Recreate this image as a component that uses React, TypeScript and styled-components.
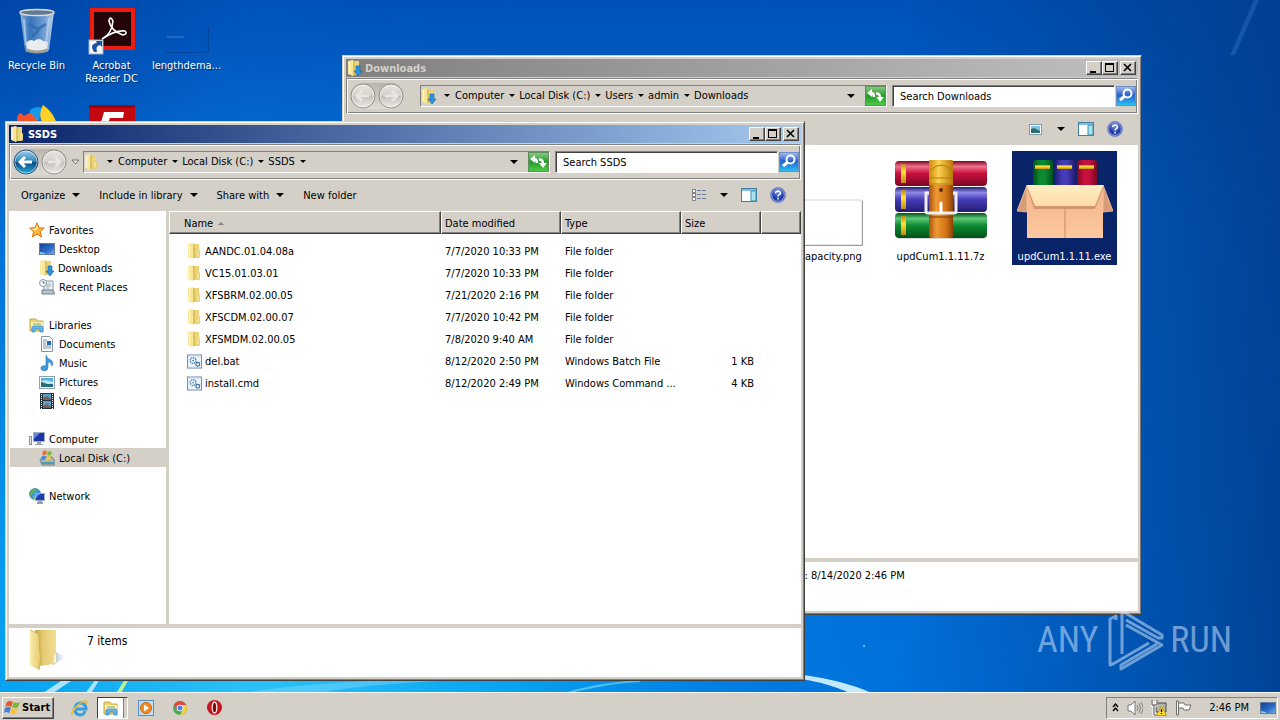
import React from 'react';
import styled, { createGlobalStyle, css } from 'styled-components';

const face = '#d4d0c8';
const uiFont = '"DejaVu Sans Condensed", "DejaVu Sans", sans-serif';

const GlobalStyle = createGlobalStyle`
  * { box-sizing: border-box; }
  body { margin: 0; overflow: hidden; background: #0058c0; }
  body, button, input, table { font: 11px/13px ${uiFont}; color: #000; }
  button { border: 0; padding: 0; background: none; }
  svg { display: block; flex: none; }
  a { color: inherit; text-decoration: none; }
`;

const raised = css`
  border: 1px solid;
  border-color: #fff #404040 #404040 #fff;
  box-shadow: inset -1px -1px #808080;
`;

/* ---------- desktop ---------- */

const Screen = styled.main`
  position: relative;
  display: flex;
  flex-direction: column;
  min-height: 100vh;
  overflow: hidden;
`;
const Wallpaper = styled.svg`
  position: absolute;
  inset: 0;
  width: 100%;
  height: 100%;
`;
const Desktop = styled.div`
  position: relative;
  flex: 1;
`;
const ShortcutGrid = styled.div`
  display: grid;
  grid-template-columns: repeat(3, 75px);
  grid-auto-rows: 97px;
  padding-top: 7px;
`;
const Shortcut = styled.a`
  display: flex;
  flex-direction: column;
  align-items: center;
  gap: 4px;
  padding: 0 3px 0 1px;
  color: #fff;
  text-align: center;
  text-shadow: 1px 1px 1px #002a66;
`;

/* ---------- windows ---------- */

const Frame = styled.section<{ $place: 'front' | 'back' }>`
  position: absolute;
  display: flex;
  flex-direction: column;
  width: 62.5vw;
  min-width: 700px;
  height: calc(100vh - 160px);
  min-height: 480px;
  padding: 3px;
  background: ${face};
  border: 1px solid;
  border-color: ${face} #404040 #404040 ${face};
  box-shadow: inset 1px 1px #fff, inset -1px -1px #808080;
  ${p => p.$place === 'front' ? 'left: 5px; top: 121px;' : 'right: 138px; top: 55px;'}
`;
const TitleBar = styled.header<{ $active: boolean }>`
  display: flex;
  align-items: center;
  gap: 3px;
  height: 18px;
  padding: 0 2px 0 1px;
  color: ${p => (p.$active ? '#fff' : face)};
  background: ${p => p.$active
    ? 'linear-gradient(90deg, #0a246a, #a6caf0)'
    : 'linear-gradient(90deg, #808080, #c0c0c0)'};
`;
const Title = styled.h1`
  flex: 1;
  margin: 0;
  font: bold 11px/13px ${uiFont};
`;
const CaptionButton = styled.button<{ $apart?: boolean }>`
  ${raised}
  width: 16px;
  height: 14px;
  margin-left: ${p => (p.$apart ? '2px' : '0')};
  background: ${face};
`;
const CaptionGroup = styled.div`
  display: flex;
`;
const NavBar = styled.nav`
  display: flex;
  align-items: center;
  height: 36px;
  margin-top: 1px;
  padding-left: 3px;
  border: 1px solid;
  border-color: #808080 #fff #fff #808080;
  box-shadow: inset 1px 1px #fff, inset -1px -1px #808080;
`;
const TravelButtons = styled.div`
  display: flex;
  gap: 2px;
  border-radius: 13px;
  background: linear-gradient(#b8b5ae, #dedbd4);
`;
const HistorySlot = styled.div`
  display: flex;
  justify-content: center;
  width: 16px;
`;
const AddressBar = styled.div`
  display: flex;
  align-items: center;
  flex: 1;
  height: 22px;
  border: 1px solid;
  border-color: #808080 #fff #fff #808080;
`;
const Crumbs = styled.ol`
  display: flex;
  align-items: center;
  flex: 1;
  gap: 4px;
  margin: 0;
  padding: 0 0 1px 8px;
  list-style: none;
`;
const Crumb = styled.li`
  display: flex;
  align-items: center;
  gap: 5px;
`;
const DropButton = styled.button`
  display: flex;
  padding: 4px 10px;
`;
const SearchBox = styled.div`
  display: flex;
  width: 245px;
  margin-left: 5px;
`;
const SearchInput = styled.input`
  flex: 1;
  min-width: 0;
  height: 22px;
  padding: 0 7px;
  border: 1px solid;
  border-color: #808080 #fff #fff #808080;
  box-shadow: inset 1px 1px #404040;
  background: #fff;
  outline: 0;
  &::placeholder { color: #000; opacity: 1; }
`;
const ToolBar = styled.div`
  display: flex;
  align-items: center;
  gap: 19px;
  height: 31px;
  padding: 0 15px 1px 12px;
`;
const ToolButton = styled.button`
  display: flex;
  align-items: center;
  gap: 7px;
`;
const ToolIcons = styled.div`
  display: flex;
  align-items: center;
  gap: 13px;
  margin-left: auto;
`;
const Body = styled.div`
  display: flex;
  flex: 1;
  min-height: 0;
`;
const SideBar = styled.aside`
  width: 160px;
  padding-top: 9px;
  background: #fff;
  border-right: 3px solid ${face};
`;
const SideGroup = styled.ul`
  margin: 0 0 19px;
  padding: 0;
  list-style: none;
`;
const SideLink = styled.a<{ $child?: boolean; $selected?: boolean }>`
  display: flex;
  align-items: center;
  gap: 4px;
  height: 19px;
  margin-left: 1px;
  padding: 1px 0 0 ${p => (p.$child ? '29px' : '19px')};
  background: ${p => (p.$selected ? face : 'transparent')};
`;
const ListPane = styled.div`
  flex: 1;
  min-width: 0;
  background: #fff;
`;
const FileTable = styled.table`
  width: 100%;
  table-layout: fixed;
  border-collapse: separate;
  border-spacing: 0;
`;
const HeadCell = styled.th<{ $w?: number; $indent?: number }>`
  ${raised}
  width: ${p => (p.$w ? `${p.$w}px` : 'auto')};
  height: 23px;
  padding: 1px 0 0 ${p => p.$indent ?? 3}px;
  background: ${face};
  text-align: left;
  font-weight: normal;
`;
const SortLabel = styled.span`
  display: flex;
  align-items: center;
  gap: 5px;
`;
const Spacer = styled.tr`
  height: 6px;
`;
const Cell = styled.td<{ $right?: boolean }>`
  height: 22px;
  padding: 0 ${p => (p.$right ? '7px' : '0')} 0 4px;
  white-space: nowrap;
  text-align: ${p => (p.$right ? 'right' : 'left')};
`;
const FileName = styled.a`
  display: flex;
  align-items: center;
  gap: 3px;
  padding-left: 14px;
`;
const TilePane = styled.div`
  display: flex;
  flex: 1;
  align-items: flex-start;
  justify-content: flex-end;
  gap: 19px;
  padding: 6px 21px;
  background: #fff;
`;
const Tile = styled.a<{ $selected?: boolean }>`
  display: flex;
  flex-direction: column;
  align-items: center;
  gap: 2px;
  width: 105px;
  height: 114px;
  padding-top: 1px;
  white-space: nowrap;
  color: ${p => (p.$selected ? '#fff' : '#000')};
  background: ${p => (p.$selected ? '#0a246a' : 'transparent')};
`;
const DetailsPane = styled.footer`
  display: flex;
  gap: 22px;
  height: 49px;
  margin-top: 4px;
  padding-left: 14px;
  background: #fff;
`;
const ItemCount = styled.p`
  margin: 6px 0 0;
  font-size: 12px;
  line-height: 14px;
`;
const CreatedLine = styled.p`
  margin: 7px 0 0;
  padding-left: 380px;
`;

/* ---------- watermark and taskbar ---------- */

const Watermark = styled.div`
  position: absolute;
  right: 48px;
  bottom: 20px;
  display: flex;
  align-items: center;
  gap: 5px;
  font: 36px/60px "Roboto Condensed", "Liberation Sans Narrow", "Liberation Sans", sans-serif;
  color: rgba(220, 235, 255, 0.5);
`;
const TaskBar = styled.footer`
  position: relative;
  display: flex;
  align-items: center;
  height: 28px;
  padding: 2px 2px 0;
  background: ${face};
  border-top: 1px solid #fff;
`;
const StartButton = styled.button`
  ${raised}
  display: flex;
  align-items: center;
  gap: 1px;
  height: 22px;
  padding: 0 3px 0 1px;
  font: bold 11px/13px ${uiFont};
`;
const QuickLaunch = styled.div`
  display: flex;
  align-items: center;
  margin-left: 9px;
`;
const TaskButton = styled.button<{ $pressed?: boolean }>`
  display: flex;
  align-items: center;
  justify-content: center;
  width: 34px;
  height: 22px;
  ${p => p.$pressed && css`
    background: #fff;
    border: 1px solid;
    border-color: #404040 #fff #fff #404040;
    box-shadow: inset -3px 0 ${face}, inset -4px 0 #808080;
    width: 31px;
    margin-right: 1px;
    padding-right: 3px;
  `}
`;
const Tray = styled.div`
  display: flex;
  align-items: center;
  gap: 8px;
  height: 22px;
  margin-left: auto;
  padding: 0 1px 0 5px;
  border: 1px solid;
  border-color: #808080 #fff #fff #808080;
`;
const Clock = styled.time`
  padding: 0 3px 0 9px;
`;

/* ---------- drawings ---------- */

const Caret = ({ w = 8 }: { w?: number }) => (
  <svg width={w} height={w / 2} viewBox="0 0 8 4"><path d="M0 0h8L4 4z" fill="#000" /></svg>
);

const FolderIcon = ({ arrow }: { arrow?: boolean }) => (
  <svg width="15" height="16" viewBox="0 0 15 16">
    <path d="M6 1h6v6l1 1v6l-1 1H6z" fill="#ecd679" />
    <path d="M6 1h2v14H6z" fill="#dcc158" />
    <path d="M1 1l5-1 1 1v14l-1 1-5-2z" fill="#f7e69c" />
    <path d="M6.500 1v14" stroke="#cfb14a" strokeWidth=".7" />
    <path d="M2.500 2v11" stroke="#fff8d4" />
    <path d="M10 8l2-1v7h-2z" fill="#fbf0b4" stroke="#d6bb58" strokeWidth=".5" />
    {arrow && <path d="M9 6h4v5h2l-4 5-4-5h2z" fill="#2a94dd" stroke="#0f5fa8" strokeWidth=".6" />}
  </svg>
);

const BigFolder = () => (
  <svg width="42" height="46" viewBox="0 0 42 46">
    <defs>
      <linearGradient id="bf1"><stop offset="0" stopColor="#f9ecab" /><stop offset="1" stopColor="#e4c768" /></linearGradient>
      <linearGradient id="bf2"><stop offset="0" stopColor="#c4a64a" /><stop offset=".4" stopColor="#e5cb74" /><stop offset="1" stopColor="#f1dd92" /></linearGradient>
      <linearGradient id="bf3"><stop offset="0" stopColor="#8ea0b0" stopOpacity=".8" /><stop offset="1" stopColor="#ccd8e4" stopOpacity="0" /></linearGradient>
    </defs>
    <path d="M31 23l12 6-13 8z" fill="url(#bf3)" />
    <path d="M12 2h21v33l-2 1-14 2z" fill="url(#bf2)" />
    <path d="M31 28l2-2v8l-2 1z" fill="#fff8cc" />
    <path d="M7 2l9 4 1 20 1 2-2 14-9-5z" fill="url(#bf1)" />
    <path d="M7 2l9 4 1 20 1 2-2 14" fill="none" stroke="#c9a94a" strokeWidth=".8" />
  </svg>
);

const Travel = ({ live, flip }: { live?: boolean; flip?: boolean }) => {
  const id = live ? 'tvLive' : 'tvIdle';
  return (
    <svg width="26" height="26" viewBox="0 0 26 26">
      <defs>
        <linearGradient id={id} x2="0" y2="1">
          <stop offset="0" stopColor={live ? '#a8d3ea' : '#e9e7e3'} />
          <stop offset=".5" stopColor={live ? '#2480b6' : '#d3d0ca'} />
          <stop offset=".52" stopColor={live ? '#0a4a80' : '#c4c1bb'} />
          <stop offset="1" stopColor={live ? '#29b2e4' : '#efede9'} />
        </linearGradient>
      </defs>
      <circle cx="13" cy="13" r="12" fill={`url(#${id})`} stroke={live ? '#35577a' : '#8e8c88'} />
      <circle cx="13" cy="13" r="11" fill="none" stroke="#fff" strokeOpacity=".45" />
      <path
        transform={flip ? 'translate(26 0) scale(-1 1)' : undefined}
        d="M12 8l-5 5 5 5M7 13h12" fill="none" stroke={live ? '#fff' : '#e9e7e3'} strokeWidth={live ? 3 : 2.5}
      />
    </svg>
  );
};

const RefreshIcon = () => (
  <svg width="21" height="20" viewBox="0 0 21 20">
    <defs><linearGradient id="rf" x2="0" y2="1"><stop offset="0" stopColor="#8acb83" /><stop offset=".5" stopColor="#239a2b" /><stop offset="1" stopColor="#4fcf4a" /></linearGradient></defs>
    <rect x=".5" y=".5" width="20" height="19" fill="url(#rf)" stroke="#5c8f58" />
    <path d="M7 3v8L2 7z" fill="#fff" />
    <path d="M6 7q3 0 3 4" fill="none" stroke="#fff" strokeWidth="2.500" />
    <path d="M11 11h8l-4 5z" fill="#fff" />
    <path d="M11 7.500q4 0 4 4" fill="none" stroke="#fff" strokeWidth="2.500" />
  </svg>
);

const SearchIcon = () => (
  <svg width="22" height="22" viewBox="0 0 22 22">
    <defs><linearGradient id="si" x2="0" y2="1"><stop offset="0" stopColor="#a6bfeb" /><stop offset=".45" stopColor="#2b5fce" /><stop offset="1" stopColor="#29c4f4" /></linearGradient></defs>
    <rect x="1.500" y="1.500" width="19" height="19" fill="url(#si)" stroke="#6d8fc4" />
    <circle cx="12.500" cy="8.500" r="4" fill="none" stroke="#fff" strokeWidth="2" />
    <path d="M10 11l-5 4" stroke="#fff" strokeWidth="3" />
  </svg>
);

const PaneIcon = () => (
  <svg width="16" height="14" viewBox="0 0 16 14">
    <rect x=".5" y=".5" width="15" height="13" fill="#fff" stroke="#3f7da5" />
    <path d="M1 2h14" stroke="#8bbbd8" strokeWidth="2" />
    <path d="M10 3h5v10h-5z" fill="#a5e0ee" stroke="#3f8fae" />
  </svg>
);

const HelpIcon = () => (
  <svg width="16" height="16" viewBox="0 0 16 16">
    <defs><radialGradient id="hp" cy=".3"><stop offset="0" stopColor="#6f92e4" /><stop offset="1" stopColor="#1c37a6" /></radialGradient></defs>
    <circle cx="8" cy="8" r="7.500" fill="#2c49b4" stroke="#7d8cc4" />
    <circle cx="8" cy="8" r="6.300" fill="url(#hp)" stroke="#dfe5f6" strokeWidth=".6" />
    <path d="M5.500 6.200C5.500 3.500 10.600 3.500 10.500 6c0 1.800-2.400 1.600-2.400 3.500M8.100 10.800v1.700" fill="none" stroke="#fff" strokeWidth="1.600" />
  </svg>
);

const ListViewIcon = () => (
  <svg width="16" height="14" viewBox="0 0 16 14">
    {[0, 4, 8].map(y => (
      <g key={y}>
        <rect x="1.500" y={y + 1.5} width="3" height="3" fill="#fff" stroke="#84878e" />
        <path d={`M6 ${y + 2.5}h4M11 ${y + 2.5}h4`} stroke="#6a7f9b" />
      </g>
    ))}
  </svg>
);

const PictureIcon = () => (
  <svg width="16" height="13" viewBox="0 0 16 13">
    <rect x=".5" y=".5" width="15" height="12" fill="#fff" stroke="#8fa3b5" />
    <path d="M2 2h12v9H2z" fill="#58b2e2" />
    <path d="M2 5q5-2 12 1v5H2z" fill="#bce3ee" />
    <path d="M2 6q4 1 6 2h6v3H2z" fill="#236b78" />
  </svg>
);

const ThumbViewIcon = () => (
  <svg width="15" height="11" viewBox="0 0 15 11">
    <rect x=".5" y=".5" width="12" height="10" fill="#fff" stroke="#7f9ab0" />
    <path d="M2 2h9v7H2z" fill="#7cc3e4" />
    <path d="M2 5l3-1 6 3v2H2z" fill="#2d6f6c" />
  </svg>
);

const StarIcon = () => (
  <svg width="16" height="16" viewBox="0 0 16 16">
    <path d="M8 .8l2 4.900 5.300.4-4 3.500 1.300 5.400L8 12.200 3.300 15l1.300-5.400-4-3.500 5.400-.4z" fill="#fdb73e" stroke="#dc7418" />
    <path d="M8 3l1.200 3.500L6 9l-3-2 3.500-.5z" fill="#ffe999" />
  </svg>
);

const MonitorIcon = () => (
  <svg width="16" height="14" viewBox="0 0 16 14">
    <defs><linearGradient id="mo" x2="1" y2="1"><stop offset="0" stopColor="#143f91" /><stop offset=".6" stopColor="#2c6dc9" /><stop offset="1" stopColor="#7db6ea" /></linearGradient></defs>
    <rect x=".5" y="1.500" width="15" height="11" fill="url(#mo)" stroke="#5f7ba0" />
    <path d="M1 10l5 1v1H1z" fill="#8cc8ef" />
  </svg>
);

const RecentIcon = () => (
  <svg width="16" height="16" viewBox="0 0 16 16">
    <path d="M5 2h9v10H5z" fill="#edf1f4" stroke="#8796a5" />
    <path d="M7 5h5M7 7h5M7 9h3" stroke="#9aabba" />
    <path d="M3 11h11l2 4H3z" fill="#b6c3ca" stroke="#75838e" />
    <circle cx="4" cy="4" r="3.500" fill="#f6f9fb" stroke="#8d9aa8" />
    <path d="M4 2v2h2" fill="none" stroke="#5c6e80" />
  </svg>
);

const LibraryIcon = ({ size = 16 }: { size?: number }) => (
  <svg width={size} height={size} viewBox="0 0 16 16">
    <path d="M1 2h6l1 2h6v10H1z" fill="#ecd274" stroke="#c9a843" />
    <path d="M2 5h12v5H2z" fill="#fbf1b9" />
    <path d="M4 7h8" stroke="#6dae6c" />
    <path d="M3 15V11q0-2 2-2h7q2 0 2 2v4h-3v-3H6v3z" fill="#68b7e8" stroke="#3582bd" strokeWidth=".7" />
  </svg>
);

const DocumentIcon = () => (
  <svg width="16" height="16" viewBox="0 0 16 16">
    <path d="M2.500.5h8l3 3v12h-11z" fill="#fff" stroke="#7e95aa" />
    <path d="M4 4h4M4 6h3M4 8h3M4 10h8M4 12h8" stroke="#6e8fae" />
    <path d="M8 5h4v4H8z" fill="#2867ab" />
  </svg>
);

const MusicIcon = () => (
  <svg width="16" height="16" viewBox="0 0 16 16">
    <path d="M7 0q1 4 5 5 3 2 1 6-1-4-4-4v5q0 4-4 4-4-1-3-4 2-2 5-1z" fill="#3f9fdd" stroke="#2173b0" strokeWidth=".6" />
  </svg>
);

const VideoIcon = () => (
  <svg width="16" height="16" viewBox="0 0 16 16">
    <rect x="1" width="14" height="16" fill="#24323e" />
    <path d="M4 1h8v6H4zM4 8h8v7H4z" fill="#5e9ec7" />
    <path d="M4 5l4-2 4 3v1H4zM4 13l4-2 4 3v1H4z" fill="#7c5f52" />
    <path d="M2.500 1v15M13.500 1v15" stroke="#fff" strokeDasharray="1 1" />
  </svg>
);

const ComputerIcon = () => (
  <svg width="16" height="16" viewBox="0 0 16 16">
    <rect x=".5" y="5.500" width="2" height="8" fill="#e1e3e6" stroke="#8b919b" />
    <rect x="4.500" y="1.500" width="11" height="9" fill="#1b35a8" stroke="#a2adc2" />
    <path d="M5 2h6L5 8z" fill="#5f86e2" />
    <path d="M8 11h4v2h2v1H6v-1h2z" fill="#9ba2ad" />
  </svg>
);

const DiskIcon = () => (
  <svg width="16" height="16" viewBox="0 0 16 16">
    <path d="M1 10l2-3h10l3 4v4H3z" fill="#a9b5ba" stroke="#66747b" strokeWidth=".8" />
    <path d="M2 12h13v2H3z" fill="#4f9da6" />
    <path d="M4 1q2-1 4 0L7 5Q5 4 3 5z" fill="#f0692d" />
    <path d="M9 1q2 1 4 0l-1 4q-2 1-4 0z" fill="#77bd43" />
    <path d="M3 6q2-1 4 0l-1 4q-2-1-4 0z" fill="#3f8de0" />
    <path d="M8 6q2 1 4 0l-1 4q-2 1-4 0z" fill="#fdc836" />
  </svg>
);

const NetworkIcon = () => (
  <svg width="16" height="16" viewBox="0 0 16 16">
    <circle cx="6" cy="6" r="5.500" fill="#3d99d2" stroke="#2c6a92" strokeWidth=".6" />
    <path d="M2 3q3-3 5-2l-1 3-3 2-2 2q-1-3 1-5z" fill="#59b757" />
    <path d="M4 8l3 1-1 3-2-1z" fill="#75c35b" />
    <rect x="6.500" y="5.500" width="9" height="7" fill="#1b3cab" stroke="#a1b0c8" />
    <path d="M7 6h4L7 10z" fill="#5c8be8" />
    <path d="M9 13h4v1h1v2H8v-2h1z" fill="#95a0ae" />
  </svg>
);

const ScriptIcon = () => (
  <svg width="15" height="15" viewBox="0 0 16 15">
    <rect x=".5" y=".5" width="15" height="14" fill="#e8f2fa" stroke="#6e8cab" />
    <path d="M1 1h14v1H1z" fill="#b7d1e8" />
    <circle cx="6.500" cy="6.500" r="3" fill="#fff" stroke="#4583ba" strokeWidth="1.500" strokeDasharray="1.500 .8" />
    <circle cx="6.500" cy="6.500" r="1" fill="#4583ba" />
    <circle cx="11.500" cy="10.500" r="2" fill="#fff" stroke="#3f6c97" strokeWidth="1.300" />
  </svg>
);

const RecycleBin = () => (
  <svg width="48" height="48" viewBox="0 0 48 48">
    <defs><linearGradient id="rb"><stop offset="0" stopColor="#8fb4dc" /><stop offset=".3" stopColor="#4780bf" stopOpacity=".8" /><stop offset=".7" stopColor="#6c9cd0" /><stop offset="1" stopColor="#b8d0ea" /></linearGradient></defs>
    <path d="M7 5h34l-5 38q-12 6-24 0z" fill="url(#rb)" />
    <path d="M13 36q4-5 8-2 5-4 9 0l5 1-1 8q-10 4-20 0z" fill="#e9edf0" />
    <path d="M13 43q11 4 22 0" stroke="#a09e94" strokeWidth="3" fill="none" />
    <path d="M15 17l10 5 8-5M19 30l7-7" stroke="#2f66ae" strokeOpacity=".7" strokeWidth="3" fill="none" />
    <path d="M11 12l2 26M36 11l-3 25" stroke="#c8ddf2" strokeOpacity=".6" strokeWidth="2" fill="none" />
    <ellipse cx="24" cy="5.500" rx="17" ry="3" fill="#62798f" stroke="#d9dcd8" strokeWidth="1.500" />
  </svg>
);

const AcrobatIcon = () => (
  <svg width="48" height="48" viewBox="0 0 48 48">
    <rect x="4" y="3" width="41" height="38" fill="#240509" stroke="#ed1c10" strokeWidth="4" />
    <path d="M14 32q10-5 11-18-3-6-4 0 2 10 14 14 5-1 2-4-10-1-23 8z" fill="none" stroke="#fff" strokeWidth="1.600" />
    <rect x="1" y="33" width="14" height="14" fill="#f2f5f8" stroke="#9eb0c2" />
    <path d="M6 45q-5-8 3-9l-1-2h6v6l-2-2q-5 1-3 7z" fill="#1c4fa5" />
  </svg>
);

const FaintPicture = () => (
  <svg width="48" height="48" viewBox="0 0 48 48">
    <path d="M2 19v26h43V19" fill="#0050b4" fillOpacity=".2" />
    <path d="M2 45.500h43.500V20" fill="none" stroke="#063b88" strokeOpacity=".6" />
    <path d="M4 30h17" stroke="#6ba6d6" strokeOpacity=".6" />
  </svg>
);

const FirefoxIcon = () => (
  <svg width="48" height="48" viewBox="0 0 48 48">
    <circle cx="24" cy="24" r="17" fill="#1a67c9" />
    <path d="M17 6q6-5 12-2l-3 12-10 1z" fill="#139bea" />
    <path d="M4 18q0-9 4-9l3 3q6-5 9-1l5 6-2 17q-19-2-19-16z" fill="#f4522e" />
    <path d="M30 1q12 8 14 21 0 20-20 23-14 0-19-14 12 9 22 1 6-7 2-14-4-8 1-17z" fill="#ffd126" />
  </svg>
);

const FlashIcon = () => (
  <svg width="48" height="48" viewBox="0 0 48 48">
    <rect x="1" y="1" width="46" height="46" fill="#c3090f" />
    <path d="M1 1h46v3H1z" fill="#9c0508" />
    <path d="M16 8h20l-1 6H22l-2 5h11l-1 6H18l-4 14H7z" fill="#fff" />
  </svg>
);

const ShortcutBlock = styled.span`
  height: 48px;
`;

const BlankPicture = () => (
  <svg width="94" height="96" viewBox="0 0 94 96">
    <path d="M2 48h90v45H2z" fill="#fff" stroke="#d4d4d4" />
    <path d="M3 93.500h89.500V49" fill="none" stroke="#9a9a9a" />
  </svg>
);

const Tubes = () => (
  <defs>
    {[['r', '#f0708a', '#c8103c', '#7a0824'], ['b', '#8e8ae6', '#443cb8', '#241c70'], ['g', '#5cc878', '#0c8a30', '#04501a']].map(([k, a, b, c]) => (
      <React.Fragment key={k}>
        <linearGradient id={`tube-${k}`} x2="0" y2="1">
          <stop offset="0" stopColor={c} /><stop offset=".22" stopColor={a} /><stop offset=".5" stopColor={b} /><stop offset="1" stopColor={c} />
        </linearGradient>
        <linearGradient id={`spine-${k}`}>
          <stop offset="0" stopColor={c} /><stop offset=".35" stopColor={b} /><stop offset=".6" stopColor={b} /><stop offset="1" stopColor={c} />
        </linearGradient>
      </React.Fragment>
    ))}
    <linearGradient id="belt"><stop offset="0" stopColor="#a85208" /><stop offset=".3" stopColor="#ee9a34" /><stop offset=".7" stopColor="#d47418" /><stop offset="1" stopColor="#8e4206" /></linearGradient>
    <linearGradient id="beltTop"><stop offset="0" stopColor="#c98a0c" /><stop offset=".4" stopColor="#fcd250" /><stop offset="1" stopColor="#b87808" /></linearGradient>
    <linearGradient id="gold" x2="0" y2="1"><stop offset="0" stopColor="#c08a10" /><stop offset=".4" stopColor="#ffe23c" /><stop offset="1" stopColor="#c48a0c" /></linearGradient>
    <linearGradient id="carton" x2="0" y2="1"><stop offset="0" stopColor="#f2b488" /><stop offset="1" stopColor="#fcc8a0" /></linearGradient>
    <linearGradient id="lid" x2="0" y2="1"><stop offset="0" stopColor="#fdeec4" /><stop offset="1" stopColor="#fcdca8" /></linearGradient>
  </defs>
);

const ArchiveIcon = () => (
  <svg width="96" height="96" viewBox="0 0 96 96">
    <Tubes />
    <path d="M5 85h86v2H5z" fill="#000" fillOpacity=".15" />
    {['r', 'b', 'g'].map((k, i) => (
      <g key={k}>
        <rect x="2" y={9 + i * 26} width="92" height="25" rx="4" fill={`url(#tube-${k})`} />
        <rect x="8" y={12 + i * 26} width="5" height="19" fill="url(#gold)" />
      </g>
    ))}
    <rect x="36" y="8" width="24" height="78" rx="2" fill="url(#belt)" />
    <path d="M36 10q0-2 2-2h20q2 0 2 2v23H36z" fill="url(#beltTop)" />
    <path d="M36 26h24M36 32h24M38 18q10-10 20 0" stroke="#b37a0c" fill="none" />
    <circle cx="48" cy="38" r="2" fill="#5f2c04" />
    <path d="M36 41h-3v18q0 2 2 2h26q2 0 2-2V41h-3" fill="none" stroke="#eceef0" strokeWidth="3" />
    <path d="M48 51v9" stroke="#fff" strokeWidth="3" strokeLinecap="round" />
    <path d="M36 65h24" stroke="#7f3905" />
  </svg>
);

const InstallerIcon = () => (
  <svg width="96" height="96" viewBox="0 0 96 96">
    {['g', 'b', 'r'].map((k, i) => (
      <g key={k}>
        <path d={`M${16 + i * 22} 36V11q0-3 3-3h14q3 0 3 3v25z`} fill={`url(#spine-${k})`} />
        <rect x={18 + i * 22} y="13" width="15" height="4" fill="url(#gold)" />
      </g>
    ))}
    <path d="M10 33h76v53H10z" fill="url(#carton)" />
    <path d="M10 33L0 59l10 1zM86 33l10 26-10 1z" fill="#d99b78" stroke="#f4c6a4" strokeWidth=".8" />
    <path d="M10 33h76l-8 21H18z" fill="url(#lid)" />
    <path d="M10 35l8 19h60l8-19v2L78 57H17z" fill="#c48662" fillOpacity=".7" />
    <path d="M48 56v30" stroke="#c88a66" />
  </svg>
);

const WindowsFlag = () => (
  <svg width="17" height="16" viewBox="0 0 17 16">
    <path d="M3 2q3-2 6 0L7 7Q4 5 1 7z" fill="#e8562c" />
    <path d="M10 2q3 2 6 0l-2 5q-3 2-6 0z" fill="#7bb83a" />
    <path d="M1 8q3-2 6 0l-2 5q-3-2-5 0z" fill="#3f80d8" />
    <path d="M8 8q3 2 6 0l-2 5q-3 2-6 0z" fill="#f9c22e" />
  </svg>
);

const IeIcon = () => (
  <svg width="18" height="18" viewBox="0 0 18 18">
    <path d="M14 12q-1 4-5 4-6-1-5-7 1-5 6-5 5 1 5 6H5" fill="none" stroke="#2f9fe0" strokeWidth="3" />
    <path d="M1 16Q-1 12 6 6q8-6 10-4 1 1-1 4 1-3-1-3-3 0-8 5-5 6-5 8z" fill="#f3c63a" stroke="#d3a11e" strokeWidth=".4" />
  </svg>
);

const MediaIcon = () => (
  <svg width="16" height="16" viewBox="0 0 16 16">
    <rect x=".5" y=".5" width="15" height="15" fill="#bfdcf2" stroke="#5490c0" />
    <circle cx="8" cy="8" r="5.500" fill="#f58a1c" stroke="#d06808" />
    <path d="M6 4.500L11 8l-5 3.500z" fill="#fff" />
  </svg>
);

const ChromeIcon = () => (
  <svg width="14" height="14" viewBox="0 0 14 14">
    <circle cx="7" cy="7" r="7" fill="#4ba955" />
    <path d="M1 3.500A7 7 0 0 1 13.200 4H7L4 8.500z" fill="#df4a3c" />
    <path d="M13.200 4A7 7 0 0 1 7 14l3-5.500L10 4z" fill="#fbcf3b" />
    <circle cx="7" cy="7" r="3.300" fill="#fff" /><circle cx="7" cy="7" r="2.500" fill="#4482e8" />
  </svg>
);

const OperaIcon = () => (
  <svg width="15" height="15" viewBox="0 0 15 15">
    <circle cx="7.500" cy="7.500" r="7.500" fill="#c2161d" />
    <ellipse cx="7.500" cy="7.500" rx="2.300" ry="5.500" fill="#7e0a10" stroke="#fbe6e6" strokeWidth="1.300" />
  </svg>
);

const SpeakerIcon = () => (
  <svg width="16" height="16" viewBox="0 0 16 16">
    <path d="M1 5h3l4-4v14l-4-4H1z" fill="#fff" stroke="#77756f" />
    <path d="M10 5q2 3 0 6M12 3q3 5 0 10M14 2q4 6 0 12" fill="none" stroke="#84827c" />
  </svg>
);

const LanIcon = () => (
  <svg width="16" height="16" viewBox="0 0 16 16">
    <path d="M5 3h10v9H5z" fill="#b5b5ae" stroke="#4a4a46" />
    <path d="M1 1v4h4V1M3 5v10h3" fill="none" stroke="#fff" strokeWidth="3" />
    <path d="M1 0v5h5V0M3 5v10h3" fill="none" stroke="#4a4a46" />
    <path d="M10.500 6l5 9.500h-10z" fill="#ffe02e" stroke="#c59b09" />
    <path d="M10.500 9v3M10.500 13v1" stroke="#000" strokeWidth="1.300" />
  </svg>
);

const FlagIcon = () => (
  <svg width="17" height="16" viewBox="0 0 17 16">
    <path d="M3 3h6l1 2h6l-2 5H9L8 8H3z" fill="#fff" stroke="#6f6d68" />
    <path d="M1.500 1h2v14h-2z" fill="#fff" stroke="#6f6d68" />
  </svg>
);

const Backdrop = () => (
  <Wallpaper viewBox="0 0 1280 720" preserveAspectRatio="none" aria-hidden="true">
    <defs>
      <linearGradient id="sky" x2="0" y2="1">
        <stop offset="0" stopColor="#0052b8" /><stop offset=".3" stopColor="#0566d0" /><stop offset="1" stopColor="#0070dc" />
      </linearGradient>
      <radialGradient id="glow" gradientUnits="userSpaceOnUse" cx="260" cy="720" r="720">
        <stop offset="0" stopColor="#2fc4f8" /><stop offset=".35" stopColor="#08a6f2" stopOpacity=".95" /><stop offset="1" stopColor="#0070dc" stopOpacity="0" />
      </radialGradient>
      <linearGradient id="edgeRight"><stop offset="0" stopColor="#003c8c" stopOpacity="0" /><stop offset="1" stopColor="#003c8c" stopOpacity=".85" /></linearGradient>
      <radialGradient id="edgeLeft" gradientUnits="userSpaceOnUse" cx="0" cy="0" r="240"><stop offset="0" stopColor="#003f9e" stopOpacity=".6" /><stop offset="1" stopColor="#003f9e" stopOpacity="0" /></radialGradient>
    </defs>
    <rect width="1280" height="720" fill="url(#sky)" />
    <rect width="1280" height="720" fill="url(#glow)" />
    <rect width="260" height="260" fill="url(#edgeLeft)" />
    <rect x="900" width="380" height="720" fill="url(#edgeRight)" />
    <path d="M1254 0h5l-24 55h-5z" fill="#4f92dc" fillOpacity=".25" />
    <path d="M40 695l24-16h10l-24 16zM84 695l12-16h4l-10 16z" fill="#d2f3ff" fillOpacity=".8" />
    <path d="M115 695l10-16h4l-9 16z" fill="#b9f09a" />
    <path d="M230 695q80-14 200-16h60q-130 4-180 16z" fill="#9be6fb" fillOpacity=".35" />
    <path d="M560 695q40-12 80-14" stroke="#6fd4f6" strokeOpacity=".7" strokeWidth="2" fill="none" />
    <path d="M780 672q60 6 94 22h-22q-30-14-72-18z" fill="#d8f6ff" fillOpacity=".9" />
    <circle cx="864" cy="646" r="1" fill="#8fd6f8" />
  </Wallpaper>
);

/* ---------- content ---------- */

type SideItem = { label: string; icon: React.ReactNode; selected?: boolean };

const sideGroups: SideItem[][] = [
  [
    { label: 'Favorites', icon: <StarIcon /> },
    { label: 'Desktop', icon: <MonitorIcon /> },
    { label: 'Downloads', icon: <FolderIcon arrow /> },
    { label: 'Recent Places', icon: <RecentIcon /> },
  ],
  [
    { label: 'Libraries', icon: <LibraryIcon /> },
    { label: 'Documents', icon: <DocumentIcon /> },
    { label: 'Music', icon: <MusicIcon /> },
    { label: 'Pictures', icon: <PictureIcon /> },
    { label: 'Videos', icon: <VideoIcon /> },
  ],
  [
    { label: 'Computer', icon: <ComputerIcon /> },
    { label: 'Local Disk (C:)', icon: <DiskIcon />, selected: true },
  ],
  [{ label: 'Network', icon: <NetworkIcon /> }],
];

const files = [
  ['AANDC.01.04.08a', '7/7/2020 10:33 PM', 'File folder', ''],
  ['VC15.01.03.01', '7/7/2020 10:33 PM', 'File folder', ''],
  ['XFSBRM.02.00.05', '7/21/2020 2:16 PM', 'File folder', ''],
  ['XFSCDM.02.00.07', '7/7/2020 10:42 PM', 'File folder', ''],
  ['XFSMDM.02.00.05', '7/8/2020 9:40 AM', 'File folder', ''],
  ['del.bat', '8/12/2020 2:50 PM', 'Windows Batch File', '1 KB'],
  ['install.cmd', '8/12/2020 2:49 PM', 'Windows Command ...', '4 KB'],
];

type ExplorerProps = {
  title: string;
  path: string[];
  front?: boolean;
  tools?: React.ReactNode;
  viewIcon: React.ReactNode;
  details: React.ReactNode;
  children: React.ReactNode;
};

const Explorer = ({ title, path, front = false, tools, viewIcon, details, children }: ExplorerProps) => (
  <Frame $place={front ? 'front' : 'back'} aria-label={title}>
    <TitleBar $active={front}>
      <FolderIcon arrow={!front} />
      <Title>{title}</Title>
      <CaptionGroup>
        <CaptionButton aria-label="Minimize"><svg width="14" height="12"><path d="M3 9h6v2H3z" /></svg></CaptionButton>
        <CaptionButton aria-label="Maximize"><svg width="14" height="12"><path d="M2 1h9v9H2zM3 3v6h7V3z" fillRule="evenodd" /></svg></CaptionButton>
        <CaptionButton $apart aria-label="Close"><svg width="14" height="12"><path d="M3 2l7 7M10 2L3 9" stroke="#000" strokeWidth="1.600" /></svg></CaptionButton>
      </CaptionGroup>
    </TitleBar>
    <NavBar>
      <TravelButtons>
        <button aria-label="Back"><Travel live={front} /></button>
        <button aria-label="Forward"><Travel flip /></button>
      </TravelButtons>
      <HistorySlot>
        {front && <svg width="9" height="6" viewBox="0 0 9 6"><path d="M1 1h7L4.500 5z" fill="#e9e7e2" stroke="#77756f" /></svg>}
      </HistorySlot>
      <AddressBar>
        <FolderIcon arrow={!front} />
        <Crumbs>
          {path.map((p, i) => (
            <Crumb key={p}>{i === 0 && <Caret w={6} />}<a href="#">{p}</a>{(front || i < path.length - 1) && <Caret w={6} />}</Crumb>
          ))}
        </Crumbs>
        <DropButton aria-label="Previous locations"><Caret /></DropButton>
        <button aria-label="Refresh"><RefreshIcon /></button>
      </AddressBar>
      <SearchBox>
        <SearchInput aria-label={`Search ${title}`} placeholder={`Search ${title}`} />
        <button aria-label="Search"><SearchIcon /></button>
      </SearchBox>
    </NavBar>
    <ToolBar>
      {tools}
      <ToolIcons>
        <ToolButton aria-label="Change your view">{viewIcon}</ToolButton>
        <ToolButton aria-label="More options"><Caret /></ToolButton>
        <ToolButton aria-label="Preview pane"><PaneIcon /></ToolButton>
        <ToolButton aria-label="Help"><HelpIcon /></ToolButton>
      </ToolIcons>
    </ToolBar>
    <Body>{children}</Body>
    <DetailsPane>{details}</DetailsPane>
  </Frame>
);

const desktopIcons: [string, React.ReactNode][] = [
  ['Recycle Bin', <RecycleBin />],
  ['Acrobat Reader DC', <AcrobatIcon />],
  ['lengthdema...', <FaintPicture />],
  ['', <FirefoxIcon />],
  ['', <FlashIcon />],
];

export default function App() {
  return (
    <Screen>
      <GlobalStyle />
      <Backdrop />
      <Desktop>
        <ShortcutGrid>
          {desktopIcons.map(([label, icon], i) => (
            <Shortcut href="#" key={i}><ShortcutBlock>{icon}</ShortcutBlock>{label}</Shortcut>
          ))}
        </ShortcutGrid>

        <Explorer
          title="Downloads"
          path={['Computer', 'Local Disk (C:)', 'Users', 'admin', 'Downloads']}
          viewIcon={<ThumbViewIcon />}
          details={<CreatedLine>Date created: 8/14/2020 2:46 PM</CreatedLine>}
        >
          <TilePane>
            <Tile href="#"><BlankPicture />mandcapacity.png</Tile>
            <Tile href="#"><ArchiveIcon />updCum1.1.11.7z</Tile>
            <Tile href="#" $selected><InstallerIcon />updCum1.1.11.exe</Tile>
          </TilePane>
        </Explorer>

        <Explorer
          front
          title="SSDS"
          path={['Computer', 'Local Disk (C:)', 'SSDS']}
          viewIcon={<ListViewIcon />}
          tools={
            <>
              <ToolButton>Organize <Caret /></ToolButton>
              <ToolButton>Include in library <Caret /></ToolButton>
              <ToolButton>Share with <Caret /></ToolButton>
              <ToolButton>New folder</ToolButton>
            </>
          }
          details={<><BigFolder /><ItemCount>7 items</ItemCount></>}
        >
          <SideBar>
            {sideGroups.map(group => (
              <SideGroup key={group[0].label}>
                {group.map((item, i) => (
                  <li key={item.label}>
                    <SideLink href="#" $child={i > 0} $selected={item.selected}>{item.icon}{item.label}</SideLink>
                  </li>
                ))}
              </SideGroup>
            ))}
          </SideBar>
          <ListPane>
            <FileTable>
              <thead>
                <tr>
                  <HeadCell $indent={14}>
                    <SortLabel>Name <svg width="6" height="3"><path d="M0 3l3-3 3 3z" fill="#85827c" /></svg></SortLabel>
                  </HeadCell>
                  <HeadCell $w={120}>Date modified</HeadCell>
                  <HeadCell $w={120}>Type</HeadCell>
                  <HeadCell $w={80}>Size</HeadCell>
                  <HeadCell $w={40} aria-hidden="true" />
                </tr>
              </thead>
              <tbody>
                <Spacer aria-hidden="true"><td colSpan={5} /></Spacer>
                {files.map(([name, date, type, size]) => (
                  <tr key={name}>
                    <Cell><FileName href="#">{size ? <ScriptIcon /> : <FolderIcon />}{name}</FileName></Cell>
                    <Cell>{date}</Cell>
                    <Cell>{type}</Cell>
                    <Cell $right>{size}</Cell>
                    <Cell />
                  </tr>
                ))}
              </tbody>
            </FileTable>
          </ListPane>
        </Explorer>

        <Watermark>
          <span>ANY</span>
          <svg width="62" height="64" viewBox="-4 0 62 64" fill="none" stroke="currentColor" strokeWidth="3" strokeLinejoin="round">
            <path d="M9 12V8L3 11v46l3-1 36-21" />
            <path d="M15 46V3l40 24v3h-4L19 12" />
            <path d="M19 17l36 20-41 24v-4l36-21" />
          </svg>
          <span>RUN</span>
        </Watermark>
      </Desktop>

      <TaskBar>
        <StartButton><WindowsFlag />Start</StartButton>
        <QuickLaunch>
          <TaskButton aria-label="Internet Explorer"><IeIcon /></TaskButton>
          <TaskButton $pressed aria-label="Windows Explorer"><LibraryIcon /></TaskButton>
          <TaskButton aria-label="Media Player"><MediaIcon /></TaskButton>
          <TaskButton aria-label="Chrome"><ChromeIcon /></TaskButton>
          <TaskButton aria-label="Opera"><OperaIcon /></TaskButton>
        </QuickLaunch>
        <Tray>
          <svg width="7" height="9" viewBox="0 0 7 9"><path d="M1 4l2.500-3L6 4M1 8l2.500-3L6 8" fill="none" stroke="#000" strokeWidth="1.400" /></svg>
          <SpeakerIcon />
          <LanIcon />
          <FlagIcon />
          <Clock>2:46 PM</Clock>
          <MonitorIcon />
        </Tray>
      </TaskBar>
    </Screen>
  );
}
